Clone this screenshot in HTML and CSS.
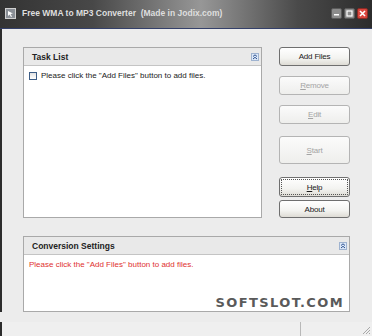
FILE: index.html
```html
<!DOCTYPE html>
<html>
<head>
    <meta charset="UTF-8">
    <title>Free WMA to MP3 Converter</title>
    <link rel="stylesheet" href="styles.css">
</head>
<body>
    <div class="window">
        <div class="titlebar">
            <svg class="app-icon" width="11" height="11" viewBox="0 0 11 11">
                <rect x="0.5" y="0.5" width="10" height="10" fill="#8a8f96" stroke="#d0d0d0"/>
                <path d="M3 3 L8 5.5 L5.5 6 L7 8.5 L6 9 L4.6 6.6 L3 8 Z" fill="#fff"/>
            </svg>
            <span class="title">Free WMA to MP3 Converter&nbsp; (Made in Jodix.com)</span>
            <div class="caption-buttons">
                <svg width="11" height="11" viewBox="0 0 11 11">
                    <rect x="0.5" y="0.5" width="10" height="10" rx="1.5" fill="#8c8c8c" stroke="#5a5a5a"/>
                    <rect x="3" y="6" width="5" height="1.5" fill="#fff"/>
                </svg>
                <svg width="11" height="11" viewBox="0 0 11 11">
                    <rect x="0.5" y="0.5" width="10" height="10" rx="1.5" fill="#8c8c8c" stroke="#5a5a5a"/>
                    <rect x="3" y="3" width="5" height="5" fill="none" stroke="#fff" stroke-width="1.2"/>
                </svg>
                <svg width="11" height="11" viewBox="0 0 11 11">
                    <rect x="0.5" y="0.5" width="10" height="10" rx="1.5" fill="#d9463e" stroke="#8a2a24"/>
                    <path d="M3 3 L8 8 M8 3 L3 8" stroke="#fff" stroke-width="1.6"/>
                </svg>
            </div>
        </div>

        <div class="client">
            <div class="main">
                <div class="panel task-panel">
                    <div class="panel-header">
                        <span>Task List</span>
                        <svg class="collapse" width="8" height="8" viewBox="0 0 8 8">
                            <rect x="0.5" y="0.5" width="7" height="7" fill="#dce8f8" stroke="#9fb3d0"/>
                            <path d="M2 3.5 L4 1.8 L6 3.5 M2 6 L4 4.3 L6 6" fill="none" stroke="#2b4f8e" stroke-width="1"/>
                        </svg>
                    </div>
                    <div class="panel-body">
                        <div class="task-row">
                            <span class="checkbox"></span>
                            <span>Please click the "Add Files" button to add files.</span>
                        </div>
                    </div>
                </div>

                <div class="buttons">
                    <button class="btn btn-add">Add Files</button>
                    <button class="btn btn-remove" disabled><u>R</u>emove</button>
                    <button class="btn btn-edit" disabled><u>E</u>dit</button>
                    <button class="btn btn-start" disabled><u>S</u>tart</button>
                    <button class="btn btn-help focused"><u>H</u>elp</button>
                    <button class="btn btn-about">About</button>
                </div>
            </div>

            <div class="panel settings-panel">
                <div class="panel-header">
                    <span>Conversion Settings</span>
                    <svg class="collapse" width="8" height="8" viewBox="0 0 8 8">
                        <rect x="0.5" y="0.5" width="7" height="7" fill="#dce8f8" stroke="#9fb3d0"/>
                        <path d="M2 3.5 L4 1.8 L6 3.5 M2 6 L4 4.3 L6 6" fill="none" stroke="#2b4f8e" stroke-width="1"/>
                    </svg>
                </div>
                <div class="panel-body">
                    <p class="notice">Please click the "Add Files" button to add files.</p>
                </div>
                <div class="watermark">SOFTSLOT.COM</div>
            </div>
        </div>

        <div class="statusbar">
            <div class="status-cell"></div>
            <div class="status-cell status-right">
                <svg class="grip" width="10" height="10" viewBox="0 0 10 10">
                    <path d="M9 2 L2 9 M9 5 L5 9 M9 8 L8 9" stroke="#a8a8a8" stroke-width="1"/>
                </svg>
            </div>
        </div>
    </div>
</body>
</html>
```

FILE: styles.css
```css
body {
    margin: 0;
    font-family: "Liberation Sans", Arial, sans-serif;
    font-size: 8px;
    color: #1a1a1a;
}

.window {
    width: 372px;
    height: 336px;
    display: flex;
    flex-direction: column;
    background-color: #ececec;
    overflow: hidden;
}

.titlebar {
    height: 29px;
    box-sizing: border-box;
    display: flex;
    align-items: center;
    padding: 0 4px 2px 5px;
    background: linear-gradient(to right, #333 0%, #484848 25%, #979797 54%, #4a4a4a 80%, #2c2c2c 100%);
    border-bottom: 1px solid #34406a;
}

.app-icon {
    flex: none;
}

.title {
    margin-left: 6px;
    color: #dedede;
    font-weight: bold;
    font-size: 8.5px;
    flex: 1;
}

.caption-buttons {
    display: flex;
    gap: 2px;
}

.client {
    flex: 1;
    display: flex;
    flex-direction: column;
    padding: 18px 22px 0 21px;
    border-left: 2px solid #2c2c2c;
    box-sizing: border-box;
}

.main {
    display: flex;
    height: 171px;
}

.panel {
    background-color: #fff;
    border: 1px solid #a9a9a9;
    display: flex;
    flex-direction: column;
    position: relative;
}

.panel-header {
    height: 17px;
    flex: none;
    display: flex;
    align-items: center;
    justify-content: space-between;
    padding: 0 2px 0 8px;
    background-color: #e9e9e9;
    border-bottom: 1px solid #c4c4c4;
    font-weight: bold;
    font-size: 8.5px;
    color: #222;
}

.panel-body {
    flex: 1;
}

.task-panel {
    width: 239px;
    box-sizing: border-box;
}

.task-row {
    display: flex;
    align-items: center;
    gap: 4px;
    padding: 5px 0 0 5px;
    color: #222;
}

.checkbox {
    width: 6px;
    height: 6px;
    border: 1px solid #3d5d86;
    background: linear-gradient(#e2e2e2, #fff);
}

.buttons {
    margin-left: 17px;
    width: 71px;
    display: flex;
    flex-direction: column;
}

.btn {
    font-family: "Liberation Sans", Arial, sans-serif;
    font-size: 8px;
    height: 19px;
    padding: 0;
    border: 1px solid #6f6f6f;
    border-radius: 3px;
    background: linear-gradient(#ffffff, #f3f3f0 60%, #dedcd5);
    color: #1a1a1a;
    letter-spacing: -0.2px;
}

.btn:disabled {
    color: #a4a4a4;
    border-color: #b4b4b4;
    background: linear-gradient(#fbfbfb, #eeeeec);
}

.btn-remove,
.btn-edit {
    margin-top: 10px;
}

.btn-start {
    margin-top: 12px;
    height: 28px;
}

.btn-help {
    margin-top: 13px;
    height: 20px;
}

.btn-help.focused {
    outline: 1px dotted #555;
    outline-offset: -3px;
}

.btn-about {
    margin-top: 3px;
    height: 18px;
}

.settings-panel {
    margin-top: 18px;
    height: 76px;
    box-sizing: border-box;
}

.notice {
    margin: 5px 0 0 5px;
    color: #e0312f;
}

.watermark {
    position: absolute;
    right: 5px;
    bottom: 1px;
    font-family: "DejaVu Sans", sans-serif;
    font-weight: bold;
    font-size: 13px;
    letter-spacing: 1.4px;
    color: #5a5a5a;
}

.statusbar {
    height: 14px;
    flex: none;
    display: flex;
    border-left: 2px solid #2c2c2c;
    background-color: #efefef;
    margin-top: 10px;
}

.status-cell {
    flex: 1;
}

.status-right {
    flex: none;
    width: 71px;
    border-left: 1px solid #b8b8b8;
    position: relative;
}

.grip {
    position: absolute;
    right: 1px;
    bottom: 1px;
}
```
